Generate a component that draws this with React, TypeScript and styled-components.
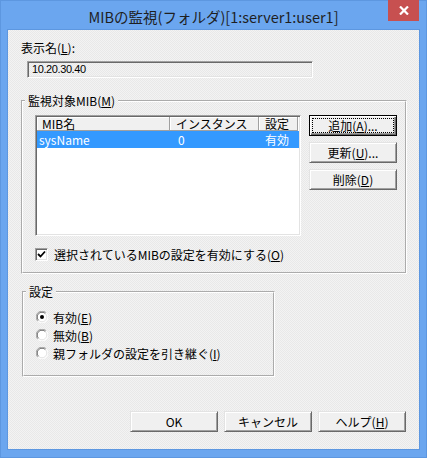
import React from 'react';
import styled, { createGlobalStyle } from 'styled-components';

const Global = createGlobalStyle`
  html, body { margin: 0; padding: 0; }
  body {
    width: 427px; height: 458px; overflow: hidden;
    font-family: "Noto Sans CJK JP", "Noto Sans", sans-serif;
    font-size: 12px; color: #000;
  }
  u { text-decoration: underline; text-underline-offset: 1px; }
`;

const Window = styled.div`
  width: 427px;
  height: 458px;
  box-sizing: border-box;
  background: #6ba6ef;
  box-shadow: inset 0 0 0 1px #5d97e0;
  display: flex;
  flex-direction: column;
`;

const TitleBar = styled.div`
  height: 30px;
  flex: none;
  display: grid;
  grid-template-columns: 1fr auto 1fr;
`;

const Title = styled.div`
  grid-column: 2;
  margin-top: 7px;
  font-size: 14.5px;
  line-height: 20px;
  color: #1f1f1f;
  white-space: nowrap;
`;

const CloseButton = styled.div`
  grid-column: 3;
  justify-self: end;
  width: 31px;
  height: 21px;
  margin-right: 8px;
  background: #c75050;
  display: flex;
  align-items: center;
  justify-content: center;
`;

const Client = styled.div`
  flex: 1;
  margin: 0 8px 9px 8px;
  box-shadow: 0 0 0 1px #5d97e0;
  background-color: #eeeeee;
  background-image: repeating-conic-gradient(#f3f3f3 0 25%, #e8e8e8 0 50%);
  background-size: 2px 2px;
  display: flex;
  flex-direction: column;
  align-items: flex-start;
  padding: 0 0 17px 13px;
  box-sizing: border-box;
`;

const FieldLabel = styled.div`
  margin-top: 11px;
  line-height: 14px;
`;

const ReadOnlyField = styled.div`
  margin: 6px 0 0 6px;
  width: 286px;
  height: 17px;
  box-sizing: border-box;
  border: 1px solid;
  border-color: #a0a0a0 #ffffff #ffffff #a0a0a0;
  box-shadow: inset 1px 1px 0 #696969, inset -1px -1px 0 #e3e3e3;
  padding-left: 4px;
  font-family: "Liberation Sans", sans-serif;
  font-size: 11px;
  letter-spacing: -0.4px;
  line-height: 15px;
  color: #000;
`;

const Group = styled.fieldset<{ $width: number; $ml: number; $mt: number }>`
  margin: ${(p) => p.$mt}px 0 0 ${(p) => p.$ml}px;
  padding: 0;
  min-width: 0;
  width: ${(p) => p.$width}px;
  box-sizing: border-box;
  border: 2px groove #ffffff;
`;

const Legend = styled.legend`
  margin-left: 2px;
  padding: 0 3px;
  line-height: 14px;
  font-size: 12px;
`;

const GroupBody = styled.div<{ $pad: string }>`
  padding: ${(p) => p.$pad};
  display: flex;
  flex-direction: column;
`;

const ListRow = styled.div`
  display: flex;
  align-items: flex-start;
  gap: 8px;
`;

const ListView = styled.div`
  width: 266px;
  height: 121px;
  box-sizing: border-box;
  background: #fff;
  border: 1px solid;
  border-color: #a0a0a0 #ffffff #ffffff #a0a0a0;
  box-shadow: inset 1px 1px 0 #696969, inset -1px -1px 0 #e3e3e3;
  padding: 1px;
  display: flex;
  flex-direction: column;
`;

const HeaderRow = styled.div`
  display: flex;
  height: 14px;
`;

const HeaderCell = styled.div<{ $w: number; $pl: number }>`
  width: ${(p) => p.$w}px;
  flex: none;
  box-sizing: border-box;
  background: #f0f0f0;
  border-right: 1px solid #a0a0a0;
  border-bottom: 1px solid #a0a0a0;
  box-shadow: inset 1px 1px 0 #fff;
  padding-left: ${(p) => p.$pl}px;
  font-size: 12px;
  line-height: 13px;
  white-space: nowrap;
`;

const DataRow = styled.div<{ $selected?: boolean }>`
  display: flex;
  height: 17px;
  background: ${(p) => (p.$selected ? '#3399ff' : 'transparent')};
  color: ${(p) => (p.$selected ? '#fff' : '#000')};
`;

const DataCell = styled.div<{ $w: number; $pl: number }>`
  width: ${(p) => p.$w}px;
  flex: none;
  padding-left: ${(p) => p.$pl}px;
  box-sizing: border-box;
  line-height: 17px;
  white-space: nowrap;
`;

const SideButtons = styled.div`
  display: flex;
  flex-direction: column;
  gap: 6px;
`;

const Button = styled.div<{ $default?: boolean }>`
  width: 88px;
  height: 21px;
  box-sizing: border-box;
  background: #f0f0f0;
  display: flex;
  border: 1px solid;
  border-color: ${(p) => (p.$default ? '#000' : '#e3e3e3 #696969 #696969 #e3e3e3')};
  box-shadow: ${(p) =>
    p.$default
      ? 'inset 1px 1px 0 #fff, inset -1px -1px 0 #696969, inset -2px -2px 0 #a0a0a0'
      : 'inset 1px 1px 0 #fff, inset -1px -1px 0 #a0a0a0'};
`;

const ButtonFace = styled.span<{ $focus?: boolean }>`
  flex: 1;
  margin: 2px;
  border: 1px dotted ${(p) => (p.$focus ? '#000' : 'transparent')};
  display: flex;
  align-items: center;
  justify-content: center;
  line-height: 13px;
  white-space: nowrap;
`;

const CheckRow = styled.div`
  margin-top: 11px;
  display: flex;
  align-items: center;
  gap: 6px;
  height: 14px;
`;

const CheckBox = styled.span`
  width: 13px;
  height: 13px;
  box-sizing: border-box;
  background: #fff;
  border: 1px solid;
  border-color: #a0a0a0 #ffffff #ffffff #a0a0a0;
  box-shadow: inset 1px 1px 0 #696969, inset -1px -1px 0 #e3e3e3;
  display: flex;
  align-items: center;
  justify-content: center;
`;

const RadioRow = styled.div`
  height: 18px;
  display: flex;
  align-items: center;
  gap: 5px;
`;

const Footer = styled.div`
  margin-top: auto;
  align-self: stretch;
  padding-right: 13px;
  display: flex;
  justify-content: flex-end;
  gap: 6px;
`;

const Radio = ({ checked }: { checked?: boolean }) => (
  <svg width="12" height="12" viewBox="0 0 12 12">
    <circle cx="6" cy="6" r="5.5" fill="#fff" />
    <path d="M1.8 10.2 A5.5 5.5 0 0 1 10.2 1.8" fill="none" stroke="#a0a0a0" strokeWidth="1" />
    <path d="M2.6 9.4 A4.5 4.5 0 0 1 9.4 2.6" fill="none" stroke="#696969" strokeWidth="1" />
    <path d="M10.2 1.8 A5.5 5.5 0 0 1 1.8 10.2" fill="none" stroke="#ffffff" strokeWidth="1" />
    <path d="M9.4 2.6 A4.5 4.5 0 0 1 2.6 9.4" fill="none" stroke="#e3e3e3" strokeWidth="1" />
    {checked && <circle cx="6" cy="6" r="2" fill="#000" />}
  </svg>
);

export default function App() {
  return (
    <>
      <Global />
      <Window>
        <TitleBar>
          <Title>MIBの監視(フォルダ)[1:server1:user1]</Title>
          <CloseButton>
            <svg width="10" height="9" viewBox="0 0 10 9">
              <path d="M1 0.5 L9 8.5 M9 0.5 L1 8.5" stroke="#fff" strokeWidth="2.2" />
            </svg>
          </CloseButton>
        </TitleBar>
        <Client>
          <FieldLabel>
            表示名(<u>L</u>):
          </FieldLabel>
          <ReadOnlyField>10.20.30.40</ReadOnlyField>
          <Group $width={386} $ml={0} $mt={16}>
            <Legend>
              監視対象MIB(<u>M</u>)
            </Legend>
            <GroupBody $pad="7px 7px 11px 12px">
              <ListRow>
                <ListView>
                  <HeaderRow>
                    <HeaderCell $w={133} $pl={5}>MIB名</HeaderCell>
                    <HeaderCell $w={89} $pl={6}>インスタンス</HeaderCell>
                    <HeaderCell $w={39} $pl={6}>設定</HeaderCell>
                  </HeaderRow>
                  <DataRow $selected>
                    <DataCell $w={133} $pl={2}>sysName</DataCell>
                    <DataCell $w={89} $pl={8}>0</DataCell>
                    <DataCell $w={40} $pl={6}>有効</DataCell>
                  </DataRow>
                </ListView>
                <SideButtons>
                  <Button $default>
                    <ButtonFace $focus>
                      追加(<u>A</u>)...
                    </ButtonFace>
                  </Button>
                  <Button>
                    <ButtonFace>
                      更新(<u>U</u>)...
                    </ButtonFace>
                  </Button>
                  <Button>
                    <ButtonFace>
                      削除(<u>D</u>)
                    </ButtonFace>
                  </Button>
                </SideButtons>
              </ListRow>
              <CheckRow>
                <CheckBox>
                  <svg width="9" height="9" viewBox="0 0 9 9">
                    <path d="M1 4 L3.5 6.5 L8 1.5" fill="none" stroke="#000" strokeWidth="1.8" />
                  </svg>
                </CheckBox>
                <span>
                  選択されているMIBの設定を有効にする(<u>O</u>)
                </span>
              </CheckRow>
            </GroupBody>
          </Group>
          <Group $width={253} $ml={1} $mt={11}>
            <Legend>設定</Legend>
            <GroupBody $pad="9px 0 13px 12px">
              <RadioRow>
                <Radio checked />
                <span>
                  有効(<u>E</u>)
                </span>
              </RadioRow>
              <RadioRow>
                <Radio />
                <span>
                  無効(<u>B</u>)
                </span>
              </RadioRow>
              <RadioRow>
                <Radio />
                <span>
                  親フォルダの設定を引き継ぐ(<u>I</u>)
                </span>
              </RadioRow>
            </GroupBody>
          </Group>
          <Footer>
            <Button>
              <ButtonFace>OK</ButtonFace>
            </Button>
            <Button>
              <ButtonFace>キャンセル</ButtonFace>
            </Button>
            <Button>
              <ButtonFace>
                ヘルプ(<u>H</u>)
              </ButtonFace>
            </Button>
          </Footer>
        </Client>
      </Window>
    </>
  );
}
